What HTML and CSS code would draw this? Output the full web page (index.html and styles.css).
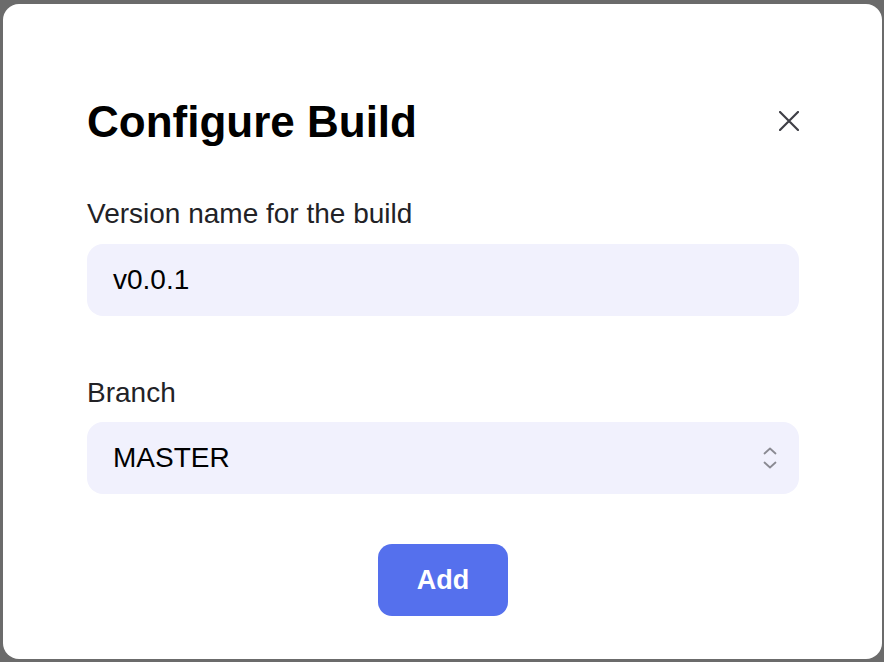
FILE: index.html
```html
<!DOCTYPE html>
<html lang="en">
<head>
<meta charset="utf-8">
<title>Configure Build</title>
<link rel="stylesheet" href="styles.css">
</head>
<body>
<div class="modal">
  <div class="header">
    <h1 class="title">Configure Build</h1>
    <button class="close" aria-label="Close">
      <svg width="20" height="20" viewBox="0 0 20 20"><path d="M1 1L19 19M19 1L1 19" stroke="#3f3f46" stroke-width="2.2" stroke-linecap="round"/></svg>
    </button>
  </div>
  <label class="label">Version name for the build</label>
  <div class="field">v0.0.1</div>
  <label class="label label-branch">Branch</label>
  <div class="field select">
    <span>MASTER</span>
    <svg class="chev" width="14" height="22" viewBox="0 0 14 22"><path d="M1.5 6.5L7 1.5L12.5 6.5M1.5 15.5L7 20.5L12.5 15.5" fill="none" stroke="#8a8a92" stroke-width="1.8" stroke-linecap="round" stroke-linejoin="round"/></svg>
  </div>
  <div class="actions">
    <button class="add">Add</button>
  </div>
</div>
</body>
</html>
```
FILE: styles.css
```css
html, body {
  margin: 0;
  padding: 0;
  background: #6b6b6b;
  height: 100%;
}
body {
  padding: 4px 2px 3px 3px;
  box-sizing: border-box;
  font-family: "Liberation Sans", Arial, sans-serif;
}
.modal {
  background: #ffffff;
  border-radius: 16px;
  height: 655px;
  box-sizing: border-box;
  padding: 94px 83px 0 84px;
  display: flex;
  flex-direction: column;
}
.header {
  display: flex;
  align-items: center;
  justify-content: space-between;
  height: 48px;
  margin-bottom: 52px;
}
.title {
  margin: 0;
  font-size: 44px;
  line-height: 48px;
  font-weight: 700;
  color: #000;
}
.close {
  border: 0;
  background: none;
  padding: 0;
  width: 20px;
  height: 20px;
  display: flex;
  margin-top: -2px;
}
.label {
  display: block;
  font-size: 28px;
  line-height: 32px;
  color: #222226;
  margin-bottom: 14px;
}
.label-branch {
  margin-top: 61px;
  margin-bottom: 13px;
}
.field {
  height: 72px;
  border-radius: 16px;
  background: #f1f1fd;
  display: flex;
  align-items: center;
  padding: 0 26px;
  font-size: 28px;
  color: #000;
  box-sizing: border-box;
}
.select {
  justify-content: space-between;
  padding-right: 22px;
}
.chev {
  display: block;
}
.actions {
  display: flex;
  justify-content: center;
  margin-top: 50px;
}
.add {
  width: 130px;
  height: 72px;
  border: 0;
  border-radius: 14px;
  background: #5570ed;
  color: #fff;
  font-family: "Liberation Sans", Arial, sans-serif;
  font-size: 27px;
  font-weight: 700;
}
```
